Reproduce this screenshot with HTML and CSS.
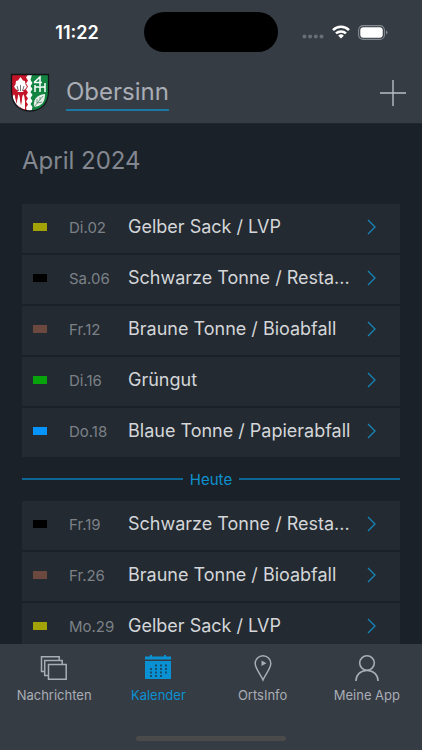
FILE: index.html
```
<!DOCTYPE html>
<html lang="de">
<head>
<meta charset="utf-8">
<meta name="viewport" content="width=device-width, initial-scale=1">
<title>Obersinn – Kalender</title>
<link rel="stylesheet" href="styles.css">
</head>
<body>
<header class="top">
  <div class="status">
    <time class="clock">11:22</time>
    <div class="island"></div>
    <div class="indicators">
      <svg width="22" height="14" viewBox="0 0 22 14" fill="#686e76"><circle cx="2.5" cy="11.500" r="2"/><circle cx="8.1" cy="11.500" r="2"/><circle cx="13.8" cy="11.500" r="2"/><circle cx="19.5" cy="11.500" r="2"/></svg>
      <svg width="18" height="14" viewBox="0 0 18 14" fill="none" stroke="#fff" stroke-width="2.5"><path d="M1 5.1a11.5 11.5 0 0 1 16 0M4 8.4a7.2 7.2 0 0 1 10 0"/><path d="M9 13.5 6.2 10.7a4 4 0 0 1 5.6 0z" fill="#fff" stroke="none"/></svg>
      <svg width="30" height="15" viewBox="0 0 30 15"><rect x=".6" y=".6" width="25.8" height="13.8" rx="4.5" fill="none" stroke="#858a91" stroke-width="1.1"/><rect x="2.3" y="2.3" width="22.4" height="10.4" rx="3" fill="#fff"/><path d="M28 5.3q3 2.200 0 4.400z" fill="#858a91"/></svg>
    </div>
  </div>
  <div class="bar">
    <svg class="crest" width="40" height="40" viewBox="0 0 40 40">
      <path d="M1.500 1.500H38.500V18c0 11-6 20-18.500 20S1.500 29 1.500 18z" fill="#fff"/>
      <path d="M1.500 1.500H18l-2 3 2 3-2 3 2 3-2 3 2 3-2 3 2 3-2 3 2 3-2 3 1 3.500C7 35 1.500 27 1.500 18z" fill="#c41428"/>
      <path d="M22 1.500H38.500V18c0 11-6 19.500-17 20l1-4-2-3 2-3-2-3 2-3-2-3 2-3-2-3 2-3-2-3z" fill="#138541"/>
      <path d="M10.500 4l2.500 3.500 2 .5.500 3.500 1.500 2-2 3-2 .5.500 2H7.500l.5-2-2-.5-2-3 1.500-2L6 8l2-.5z" fill="#fff"/>
      <path d="M10.500 18v-6M8.500 18l-1.500-5M12.500 18l1.500-5" stroke="#34383c" stroke-width=".7"/>
      <path d="M3 23q1-3 2 0l1.500 7 1.200-7q1-3 2 0l1.300 8 1.200-8q1-3 2 0l.8 5v8.500C8 34 4 29.500 2.700 25z" fill="#fff"/>
      <path d="M5 22l1.500 9L8 22zM9.500 22l1.500 11 1.500-11z" fill="#c41428"/>
      <path d="M24 9.500h8M30 13V4l-6 5.500M25 12v7M25 14h10M30 14v5M35 10v9" fill="none" stroke="#fff" stroke-width="1.500"/>
      <path d="M24 34c-1-7 2-12 11-13 0 8-3 12-11 13z" fill="#e9efeb"/>
      <path d="M24 34l9-11M27 30v-4M27 30l5-1M30 27v-3" fill="none" stroke="#4b8d63" stroke-width=".8"/>
      <path d="M1.500 1.500H38.500V18c0 11-6 20-18.500 20S1.500 29 1.500 18z" fill="none" stroke="#111518" stroke-width="1.300"/>
    </svg>
    <h1><a class="place" href="#ort">Obersinn</a></h1>
    <button class="add" type="button" aria-label="Hinzufügen"><svg width="26" height="26" viewBox="0 0 26 26" fill="none" stroke="#b9bdc4" stroke-width="1.400"><path d="M13 0v26M0 13h26"/></svg></button>
  </div>
</header>

<main class="content">
  <h2>April 2024</h2>
  <ul class="events">
    <li><a class="event" href="#e1"><span class="tag yellow"></span><span class="date">Di.02</span><span class="name">Gelber Sack / LVP</span><svg class="chevron" viewBox="0 0 10 16"><path d="m1 1 7 7-7 7"/></svg></a></li>
    <li><a class="event" href="#e2"><span class="tag black"></span><span class="date">Sa.06</span><span class="name">Schwarze Tonne / Resta...</span><svg class="chevron" viewBox="0 0 10 16"><path d="m1 1 7 7-7 7"/></svg></a></li>
    <li><a class="event" href="#e3"><span class="tag brown"></span><span class="date">Fr.12</span><span class="name">Braune Tonne / Bioabfall</span><svg class="chevron" viewBox="0 0 10 16"><path d="m1 1 7 7-7 7"/></svg></a></li>
    <li><a class="event" href="#e4"><span class="tag green"></span><span class="date">Di.16</span><span class="name">Grüngut</span><svg class="chevron" viewBox="0 0 10 16"><path d="m1 1 7 7-7 7"/></svg></a></li>
    <li><a class="event" href="#e5"><span class="tag blue"></span><span class="date">Do.18</span><span class="name">Blaue Tonne / Papierabfall</span><svg class="chevron" viewBox="0 0 10 16"><path d="m1 1 7 7-7 7"/></svg></a></li>
  </ul>
  <div class="today">Heute</div>
  <ul class="events">
    <li><a class="event" href="#e6"><span class="tag black"></span><span class="date">Fr.19</span><span class="name">Schwarze Tonne / Resta...</span><svg class="chevron" viewBox="0 0 10 16"><path d="m1 1 7 7-7 7"/></svg></a></li>
    <li><a class="event" href="#e7"><span class="tag brown"></span><span class="date">Fr.26</span><span class="name">Braune Tonne / Bioabfall</span><svg class="chevron" viewBox="0 0 10 16"><path d="m1 1 7 7-7 7"/></svg></a></li>
    <li><a class="event" href="#e8"><span class="tag yellow"></span><span class="date">Mo.29</span><span class="name">Gelber Sack / LVP</span><svg class="chevron" viewBox="0 0 10 16"><path d="m1 1 7 7-7 7"/></svg></a></li>
  </ul>
</main>

<footer class="bottom">
  <nav class="tabs">
    <a class="tab" href="#nachrichten"><svg width="28" height="28" viewBox="0 0 28 28" fill="none" stroke="currentColor" stroke-width="1.500"><path d="M8.500 10.500h17.700v14.700H8.500z"/><path d="M8 21.500H4.700V6.500h17.500V10"/><path d="M4.500 17.500H1.500V2.700h17.700V6"/></svg>Nachrichten</a>
    <a class="tab active" href="#kalender" aria-current="page"><svg width="28" height="28" viewBox="0 0 28 28" fill="currentColor"><path d="M1 2.500h5V1h2v1.500h12V1h2v1.500h5v3H1zM1 7h26v18H1z"/><path d="M11 11.500h13M6 15h18M6 18.500h18M6 22h13" fill="none" stroke="#174d6c" stroke-width="1.800" stroke-dasharray="2 3"/></svg>Kalender</a>
    <a class="tab" href="#ortsinfo"><svg width="28" height="28" viewBox="0 0 28 28" fill="none" stroke="currentColor" stroke-width="1.500"><path d="M14 26C11.500 20 6.200 14.500 6.200 9.500a7.800 7.800 0 0 1 15.600 0C21.800 14.500 16.500 20 14 26z"/><path d="M12.500 6.500v5.500l5-2.700z" fill="currentColor" stroke="none"/></svg>OrtsInfo</a>
    <a class="tab" href="#app"><svg width="28" height="28" viewBox="0 0 28 28" fill="none" stroke="currentColor" stroke-width="1.600"><circle cx="14" cy="9" r="7.300"/><path d="M3 27c0-6.500 4.500-10.500 11-10.500S25 20.500 25 27"/></svg>Meine App</a>
  </nav>
  <div class="home"></div>
</footer>
</body>
</html>
```
FILE: styles.css
```
* { box-sizing: border-box; }

body {
  margin: 0;
  height: 100vh;
  display: flex;
  flex-direction: column;
  background: #1a2128;
  color: #d4d6d9;
  font-family: Inter, "Liberation Sans", sans-serif;
}

a { color: inherit; text-decoration: none; }
h1, h2, ul { margin: 0; padding: 0; font-weight: 400; list-style: none; }
svg { display: block; flex: none; }

.top, .bottom { flex: none; background: #363c44; }
.top { border-bottom: 1px solid #20262d; }

.status {
  display: grid;
  grid-template-columns: 1fr 134px 1fr;
  align-items: center;
  padding-top: 12px;
}
.clock {
  justify-self: center;
  padding-left: 10px;
  color: #fff;
  font-size: 18px;
  font-weight: 600;
}
.island { height: 40px; border-radius: 20px; background: #000; }
.indicators {
  display: flex;
  align-items: center;
  justify-content: center;
  gap: 8px;
  padding-right: 10px;
}

.bar {
  display: flex;
  align-items: center;
  height: 71px;
  padding: 14px 16px 4px 10px;
}
.bar h1 { flex: 1; margin-left: 16px; }
.place {
  display: block;
  width: fit-content;
  border-bottom: 2px solid #1b78a5;
  color: #a9adb5;
  font-size: 24px;
  line-height: 34px;
}
.add { padding: 0; border: 0; background: none; }

.content {
  flex: 1;
  min-height: 0;
  overflow: hidden;
  padding: 20px 22px 0;
}
h2 {
  margin-bottom: 26px;
  color: #828790;
  font-size: 24px;
  line-height: 34px;
}

.events { display: grid; gap: 2px; }
.event {
  display: grid;
  grid-template-columns: 14px 59px minmax(0, 1fr) 10px;
  align-items: center;
  height: 49px;
  padding: 0 23px 3px 11px;
  background: #232a31;
}
.tag { height: 8px; }
.yellow { background: #a3a206; }
.black { background: #000; }
.brown { background: #6b493f; }
.green { background: #07a20c; }
.blue { background: #0693fb; }
.date { padding-left: 22px; color: #7c8188; font-size: 15px; }
.name {
  margin: 0 4px 0 22px;
  overflow: hidden;
  font-size: 18px;
  line-height: 26px;
  text-overflow: ellipsis;
  white-space: nowrap;
}
.chevron {
  width: 10px;
  height: 16px;
  fill: none;
  stroke: #1685b8;
  stroke-width: 1.3;
}

.today {
  display: flex;
  align-items: center;
  gap: 7px;
  height: 44px;
  color: #0e91cf;
  font-size: 15px;
}
.today::before, .today::after {
  content: "";
  flex: 1;
  height: 2px;
  background: #0d6795;
}

.tabs { display: grid; grid-template-columns: repeat(4, 1fr); padding: 10px 3px 0 2px; }
.tab {
  display: flex;
  flex-direction: column;
  align-items: center;
  gap: 4px;
  color: #a9adb5;
  font-size: 13px;
  line-height: 18px;
}
.active { color: #0a91d3; }
.home {
  width: 150px;
  height: 5px;
  margin: 32px auto 9px;
  border-radius: 3px;
  background: #4a4a4b;
}
```
